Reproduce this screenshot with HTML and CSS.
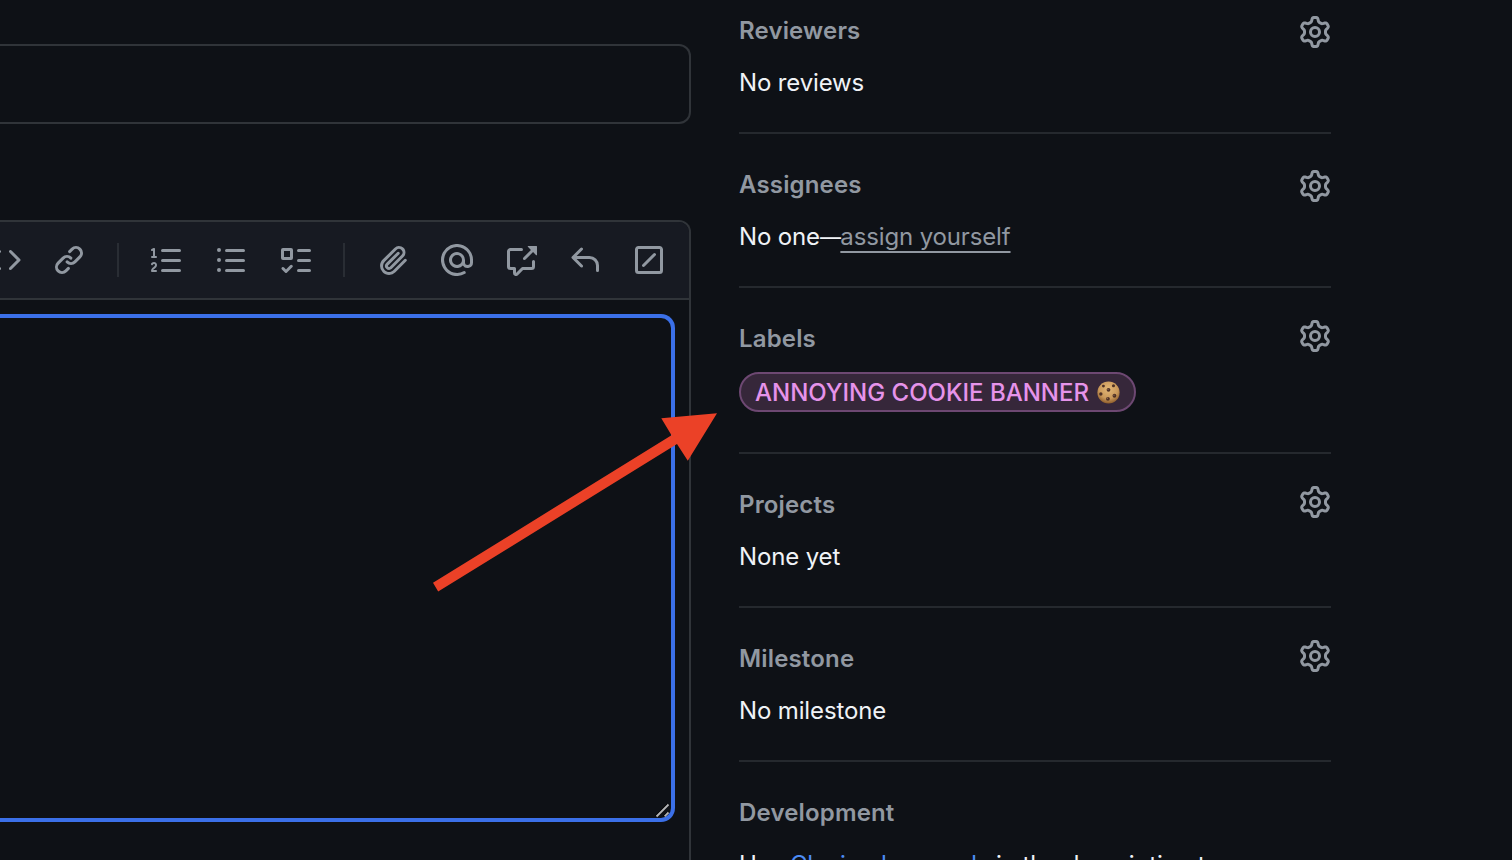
FILE: index.html
```
<!DOCTYPE html>
<html lang="en">
<head>
<meta charset="utf-8">
<title>Open a pull request</title>
<link rel="stylesheet" href="styles.css">
</head>
<body>
<svg class="defs" aria-hidden="true">
  <symbol id="gear" viewBox="0 0 16 16"><path d="M8 0a8.2 8.2 0 0 1 .701.031C9.444.095 9.99.645 10.16 1.29l.288 1.107c.018.066.079.158.212.224.231.114.454.243.668.386.123.082.233.09.299.071l1.103-.303c.644-.176 1.392.021 1.82.63.27.385.506.792.704 1.218.315.675.111 1.422-.364 1.891l-.814.806c-.049.048-.098.147-.088.294.016.257.016.515 0 .772-.01.147.038.246.088.294l.814.806c.475.469.679 1.216.364 1.891a7.977 7.977 0 0 1-.704 1.217c-.428.61-1.176.807-1.82.63l-1.102-.302c-.067-.019-.177-.011-.3.071a5.909 5.909 0 0 1-.668.386c-.133.066-.194.158-.211.224l-.29 1.106c-.168.646-.715 1.196-1.458 1.26a8.006 8.006 0 0 1-1.402 0c-.743-.064-1.289-.614-1.458-1.26l-.289-1.106c-.018-.066-.079-.158-.212-.224a5.738 5.738 0 0 1-.668-.386c-.123-.082-.233-.09-.299-.071l-1.103.303c-.644.176-1.392-.021-1.82-.63a8.12 8.12 0 0 1-.704-1.218c-.315-.675-.111-1.422.363-1.891l.815-.806c.05-.048.098-.147.088-.294a6.214 6.214 0 0 1 0-.772c.01-.147-.038-.246-.088-.294l-.815-.806C.635 6.045.431 5.298.746 4.623a7.92 7.92 0 0 1 .704-1.217c.428-.61 1.176-.807 1.82-.63l1.102.302c.067.019.177.011.3-.071.214-.143.437-.272.668-.386.133-.066.194-.158.211-.224l.29-1.106C6.009.645 6.556.095 7.299.03 7.53.01 7.764 0 8 0Zm-.571 1.525c-.036.003-.108.036-.137.146l-.289 1.105c-.147.561-.549.967-.998 1.189-.173.086-.34.183-.5.29-.417.278-.97.423-1.529.27l-1.103-.303c-.109-.03-.175.016-.195.045-.22.312-.412.644-.573.99-.014.031-.021.11.059.19l.815.806c.411.406.562.957.53 1.456a4.709 4.709 0 0 0 0 .582c.032.499-.119 1.05-.53 1.456l-.815.806c-.081.08-.073.159-.059.19.162.346.353.677.573.989.02.03.085.076.195.046l1.102-.303c.56-.153 1.113-.008 1.53.27.161.107.328.204.501.29.447.222.85.629.997 1.189l.289 1.105c.029.109.101.143.137.146a6.6 6.6 0 0 0 1.142 0c.036-.003.108-.036.137-.146l.289-1.105c.147-.561.549-.967.998-1.189.173-.086.34-.183.5-.29.417-.278.97-.423 1.529-.27l1.103.303c.109.029.175-.016.195-.045.22-.313.411-.644.573-.99.014-.031.021-.11-.059-.19l-.815-.806c-.411-.406-.562-.957-.53-1.456a4.709 4.709 0 0 0 0-.582c-.032-.499.119-1.05.53-1.456l.815-.806c.081-.08.073-.159.059-.19a6.464 6.464 0 0 0-.573-.989c-.02-.03-.085-.076-.195-.046l-1.102.303c-.56.153-1.113.008-1.53-.27a4.44 4.44 0 0 0-.501-.29c-.447-.222-.85-.629-.997-1.189l-.289-1.105c-.029-.11-.101-.143-.137-.146a6.6 6.6 0 0 0-1.142 0ZM11 8a3 3 0 1 1-6 0 3 3 0 0 1 6 0ZM9.5 8a1.5 1.5 0 1 0-3.001.001A1.5 1.5 0 0 0 9.5 8Z"/></symbol>
</svg>

<div class="page">
  <main class="editor">
    <div class="title-input"></div>
    <div class="comment">
      <div class="toolbar">
        <svg class="icon" viewBox="0 0 16 16"><path d="m11.28 3.22 4.25 4.25a.75.75 0 0 1 0 1.06l-4.25 4.25a.749.749 0 0 1-1.275-.326.749.749 0 0 1 .215-.734L13.94 8l-3.72-3.72a.749.749 0 0 1 .326-1.275.749.749 0 0 1 .734.215Zm-6.56 0a.751.751 0 0 1 1.042.018.751.751 0 0 1 .018 1.042L2.06 8l3.72 3.72a.749.749 0 0 1-.326 1.275.749.749 0 0 1-.734-.215L.47 8.53a.75.75 0 0 1 0-1.06Z"/></svg>
        <svg class="icon" viewBox="0 0 16 16"><path d="m7.775 3.275 1.25-1.25a3.5 3.5 0 1 1 4.95 4.95l-2.5 2.5a3.5 3.5 0 0 1-4.95 0 .751.751 0 0 1 .018-1.042.751.751 0 0 1 1.042-.018 1.998 1.998 0 0 0 2.83 0l2.5-2.5a2.002 2.002 0 0 0-2.83-2.83l-1.25 1.25a.751.751 0 0 1-1.042-.018.751.751 0 0 1-.018-1.042Zm-4.69 9.64a1.998 1.998 0 0 0 2.83 0l1.25-1.25a.751.751 0 0 1 1.042.018.751.751 0 0 1 .018 1.042l-1.25 1.25a3.5 3.5 0 1 1-4.95-4.95l2.5-2.5a3.5 3.5 0 0 1 4.95 0 .751.751 0 0 1-.018 1.042.751.751 0 0 1-1.042.018 1.998 1.998 0 0 0-2.83 0l-2.5 2.5a1.998 1.998 0 0 0 0 2.83Z"/></svg>
        <span class="separator"></span>
        <svg class="icon" viewBox="0 0 16 16"><path d="M5 3.25a.75.75 0 0 1 .75-.75h8.5a.75.75 0 0 1 0 1.5h-8.5A.75.75 0 0 1 5 3.25Zm0 5a.75.75 0 0 1 .75-.75h8.5a.75.75 0 0 1 0 1.5h-8.5A.75.75 0 0 1 5 8.25Zm0 5a.75.75 0 0 1 .75-.75h8.5a.75.75 0 0 1 0 1.5h-8.5a.75.75 0 0 1-.75-.75ZM.924 10.32a.5.5 0 0 1-.851-.525l.001-.001.001-.002.002-.004.007-.011c.097-.144.215-.273.348-.384.228-.19.588-.392 1.068-.392.468 0 .858.181 1.126.484.259.294.377.673.377 1.038 0 .987-.686 1.495-1.156 1.845l-.047.035c-.303.225-.522.4-.654.597h1.357a.5.5 0 0 1 0 1H.5a.5.5 0 0 1-.5-.5c0-1.005.692-1.52 1.167-1.875l.035-.025c.531-.396.8-.625.8-1.078a.57.57 0 0 0-.128-.376C1.806 10.068 1.695 10 1.5 10a.658.658 0 0 0-.429.163.835.835 0 0 0-.144.153ZM2.003 2.5V6h.503a.5.5 0 0 1 0 1H.5a.5.5 0 0 1 0-1h.503V3.308l-.28.14a.5.5 0 0 1-.446-.895l1.003-.5a.5.5 0 0 1 .723.447Z"/></svg>
        <svg class="icon" viewBox="0 0 16 16"><path d="M5.75 2.5h8.5a.75.75 0 0 1 0 1.5h-8.5a.75.75 0 0 1 0-1.5Zm0 5h8.5a.75.75 0 0 1 0 1.5h-8.5a.75.75 0 0 1 0-1.5Zm0 5h8.5a.75.75 0 0 1 0 1.5h-8.5a.75.75 0 0 1 0-1.5ZM2 14a1 1 0 1 1 0-2 1 1 0 0 1 0 2Zm1-6a1 1 0 1 1-2 0 1 1 0 0 1 2 0ZM2 4a1 1 0 1 1 0-2 1 1 0 0 1 0 2Z"/></svg>
        <svg class="icon" viewBox="0 0 16 16"><path d="M2 2h4a1 1 0 0 1 1 1v4a1 1 0 0 1-1 1H2a1 1 0 0 1-1-1V3a1 1 0 0 1 1-1Zm4.655 8.595a.75.75 0 0 1 0 1.06L4.03 14.28a.75.75 0 0 1-1.06 0l-1.5-1.5a.749.749 0 0 1 .326-1.275.749.749 0 0 1 .734.215l.97.97 2.095-2.095a.75.75 0 0 1 1.06 0ZM9.75 2.5h5.5a.75.75 0 0 1 0 1.5h-5.5a.75.75 0 0 1 0-1.5Zm0 5h5.5a.75.75 0 0 1 0 1.5h-5.5a.75.75 0 0 1 0-1.5Zm0 5h5.5a.75.75 0 0 1 0 1.5h-5.5a.75.75 0 0 1 0-1.5Zm-7.25-9v3h3v-3Z"/></svg>
        <span class="separator"></span>
        <svg class="icon" viewBox="0 0 16 16"><path d="M12.212 3.02a1.753 1.753 0 0 0-2.478.003l-5.83 5.83a3.007 3.007 0 0 0-.88 2.127c0 .795.315 1.551.88 2.116.567.567 1.333.89 2.126.89.79 0 1.548-.321 2.116-.89l5.48-5.48a.75.75 0 0 1 1.061 1.06l-5.48 5.48a4.492 4.492 0 0 1-3.177 1.33c-1.2 0-2.345-.487-3.187-1.33a4.483 4.483 0 0 1-1.32-3.177c0-1.195.475-2.341 1.32-3.186l5.83-5.83a3.25 3.25 0 0 1 5.553 2.297c0 .863-.343 1.691-.953 2.301L7.439 12.39c-.375.377-.884.59-1.416.593a1.998 1.998 0 0 1-1.412-.593 1.992 1.992 0 0 1 0-2.828l5.48-5.48a.751.751 0 0 1 1.042.018.751.751 0 0 1 .018 1.042l-5.48 5.48a.492.492 0 0 0 0 .707.499.499 0 0 0 .352.154.51.51 0 0 0 .356-.154l5.833-5.827a1.755 1.755 0 0 0 0-2.481Z"/></svg>
        <svg class="icon" viewBox="0 0 16 16"><path d="M4.75 2.37a6.501 6.501 0 0 0 6.5 11.26.75.75 0 0 1 .75 1.298A7.999 7.999 0 0 1 .989 4.148 8 8 0 0 1 16 7.75v1.5a2.75 2.75 0 0 1-5.072 1.475 3.999 3.999 0 0 1-6.65-4.19A4 4 0 0 1 12 8v1.25a1.25 1.25 0 0 0 2.5 0V7.867a6.5 6.5 0 0 0-9.75-5.496ZM10.5 8a2.5 2.5 0 1 0-5 0 2.5 2.5 0 0 0 5 0Z"/></svg>
        <svg class="icon" viewBox="0 0 16 16"><path d="M2.75 3.5a.25.25 0 0 0-.25.25v7.5c0 .138.112.25.25.25h2a.75.75 0 0 1 .75.75v2.19l2.72-2.72a.749.749 0 0 1 .53-.22h4.5a.25.25 0 0 0 .25-.25v-2.5a.75.75 0 0 1 1.5 0v2.5A1.75 1.75 0 0 1 13.25 13H9.06l-2.573 2.573A1.458 1.458 0 0 1 4 14.543V13H2.75A1.75 1.75 0 0 1 1 11.25v-7.5C1 2.784 1.784 2 2.75 2h5.5a.75.75 0 0 1 0 1.5ZM16 1.25v4.146a.25.25 0 0 1-.427.177L14.03 4.03l-3.75 3.75a.749.749 0 0 1-1.275-.326.749.749 0 0 1 .215-.734l3.75-3.75-1.543-1.543A.25.25 0 0 1 11.604 1h4.146a.25.25 0 0 1 .25.25Z"/></svg>
        <svg class="icon" viewBox="0 0 16 16"><path d="M6.78 1.97a.75.75 0 0 1 0 1.06L3.81 6h6.44A4.75 4.75 0 0 1 15 10.75v2.5a.75.75 0 0 1-1.5 0v-2.5a3.25 3.25 0 0 0-3.25-3.25H3.81l2.97 2.97a.749.749 0 0 1-.326 1.275.749.749 0 0 1-.734-.215L1.47 7.28a.75.75 0 0 1 0-1.06l4.25-4.25a.75.75 0 0 1 1.06 0Z"/></svg>
        <svg class="icon" viewBox="0 0 16 16"><path d="M13.25 1c.966 0 1.75.784 1.75 1.75v10.5A1.75 1.75 0 0 1 13.25 15H2.75A1.75 1.75 0 0 1 1 13.25V2.75C1 1.784 1.784 1 2.75 1ZM2.75 2.5a.25.25 0 0 0-.25.25v10.5c0 .138.112.25.25.25h10.5a.25.25 0 0 0 .25-.25V2.75a.25.25 0 0 0-.25-.25Zm8.53 3.28-5.5 5.5a.75.75 0 0 1-1.06-1.06l5.5-5.5a.75.75 0 0 1 1.06 1.06Z"/></svg>
      </div>
      <div class="textarea">
        <svg class="grip" viewBox="0 0 16 16"><path class="grip-shadow" d="M.8 14.2 12.5 2.5M8.8 14.4l3.4-3.4"/><path d="M1.5 14.5 13.5 2.5M9.6 14.4l3.9-3.9"/></svg>
      </div>
    </div>
  </main>

  <aside class="sidebar">
    <section class="section">
      <div class="head"><h2>Reviewers</h2><svg class="icon" viewBox="0 0 16 16"><use href="#gear"/></svg></div>
      <p>No reviews</p>
    </section>
    <section class="section">
      <div class="head"><h2>Assignees</h2><svg class="icon" viewBox="0 0 16 16"><use href="#gear"/></svg></div>
      <p>No one<span class="dash">—</span><a class="assign">assign yourself</a></p>
    </section>
    <section class="section section-labels">
      <div class="head head-raised"><h2>Labels</h2><svg class="icon" viewBox="0 0 16 16"><use href="#gear"/></svg></div>
      <span class="label"><span class="label-text">ANNOYING COOKIE BANNER</span>
        <svg class="cookie" viewBox="0 0 24 24">
          <defs><radialGradient id="dough" cx=".5" cy=".35" r=".65"><stop offset="0" stop-color="#e3b777"/><stop offset=".65" stop-color="#c9985a"/><stop offset="1" stop-color="#8d5c2b"/></radialGradient></defs>
          <circle cx="12" cy="12" r="11.6" fill="url(#dough)"/>
          <g fill="#4d3025"><circle cx="6.7" cy="5.3" r="1.5"/><circle cx="17.2" cy="5" r="1.6"/><circle cx="12" cy="9.2" r="2"/><circle cx="4" cy="13.6" r="1.8"/><circle cx="18.2" cy="15.4" r="2"/><circle cx="11.4" cy="18.6" r="2"/></g>
          <g fill="#966b50"><circle cx="11.5" cy="8.7" r=".7"/><circle cx="17.7" cy="14.8" r=".7"/><circle cx="10.9" cy="18" r=".7"/></g>
        </svg>
      </span>
    </section>
    <section class="section">
      <div class="head head-raised"><h2>Projects</h2><svg class="icon" viewBox="0 0 16 16"><use href="#gear"/></svg></div>
      <p>None yet</p>
    </section>
    <section class="section">
      <div class="head head-raised"><h2>Milestone</h2><svg class="icon" viewBox="0 0 16 16"><use href="#gear"/></svg></div>
      <p>No milestone</p>
    </section>
    <section class="section">
      <div class="head"><h2>Development</h2></div>
      <p class="development">Use <a class="keywords">Closing keywords</a> in the description to</p>
    </section>
  </aside>
</div>

<svg class="arrow" viewBox="0 0 290 190"><path d="M3 182.8 241.5 35.2 231.3 18.3 287 13.2 257.8 60.8 247 44 8.2 191.6Z"/></svg>
</body>
</html>
```
FILE: styles.css
```
* { box-sizing: border-box; }

body {
  margin: 0;
  height: 860px;
  overflow: hidden;
  background: #0e1116;
  color: #f0f3f6;
  font: 400 24px/36px Inter, "Liberation Sans", sans-serif;
}

.defs { display: none; }

.page {
  display: flex;
  gap: 48px;
  height: 860px;
  overflow: hidden;
}

.editor {
  width: 691px;
  flex: none;
  padding-top: 44px;
}

.title-input {
  height: 80px;
  border: 2px solid #303439;
  border-left: 0;
  border-radius: 0 12px 12px 0;
}

.comment {
  height: 700px;
  margin-top: 96px;
  border: 2px solid #303439;
  border-left: 0;
  border-radius: 0 12px 12px 0;
}

.toolbar {
  display: flex;
  align-items: center;
  justify-content: flex-end;
  gap: 32px;
  height: 78px;
  padding-right: 24px;
  overflow: hidden;
  background: #171a22;
  border-bottom: 2px solid #303439;
  border-radius: 0 10px 0 0;
}

.icon {
  width: 32px;
  height: 32px;
  flex: none;
  fill: #9198a1;
}

.separator {
  width: 2px;
  height: 34px;
  flex: none;
  background: #292d34;
}

.textarea {
  display: flex;
  align-items: flex-end;
  justify-content: flex-end;
  height: 508px;
  margin: 14px 14px 0 0;
  border: 4px solid #3b70e8;
  border-left: 0;
  border-radius: 0 14px 14px 0;
}

.grip {
  width: 16px;
  height: 16px;
  fill: none;
  stroke: #b4b5b7;
  stroke-width: 1.8;
}

.grip-shadow { stroke: #000; stroke-width: 2; }

.sidebar {
  width: 592px;
  flex: none;
  padding-top: 13px;
}

.section {
  padding-bottom: 31px;
  margin-bottom: 33px;
  border-bottom: 2px solid #25292e;
}

.head {
  display: flex;
  justify-content: space-between;
  height: 36px;
  margin-bottom: 16px;
}

.head .icon { margin-top: 3px; }
.head-raised .icon { margin-top: -1px; }

h2 {
  margin: 0;
  font-size: 24px;
  font-weight: 600;
  line-height: 36px;
  letter-spacing: 0.16px;
  color: #9198a1;
}

p {
  margin: 0;
  letter-spacing: -0.14px;
  white-space: nowrap;
}

.dash {
  font-size: 21px;
  line-height: 1;
  letter-spacing: -0.6px;
}

.assign {
  color: #9198a1;
  text-decoration: underline;
  text-decoration-thickness: 2px;
  text-underline-offset: 6px;
}

.development { letter-spacing: -0.1px; }

.keywords { color: #4c8cf5; }

.section-labels { padding-bottom: 40px; }
.section-labels .head { margin-bottom: 15px; }

.label {
  display: flex;
  align-items: center;
  width: 397px;
  height: 40px;
  padding: 0 14px;
  gap: 8px;
  border: 2px solid #6d4872;
  border-radius: 20px;
  background: #36273a;
  color: #e693ea;
  font-weight: 500;
  white-space: nowrap;
}

.label-text { padding-top: 2px; }

.cookie { width: 23px; height: 23px; flex: none; }

.arrow {
  position: absolute;
  left: 430px;
  top: 400px;
  width: 290px;
  height: 190px;
  overflow: visible;
  fill: #eb4127;
}
```
